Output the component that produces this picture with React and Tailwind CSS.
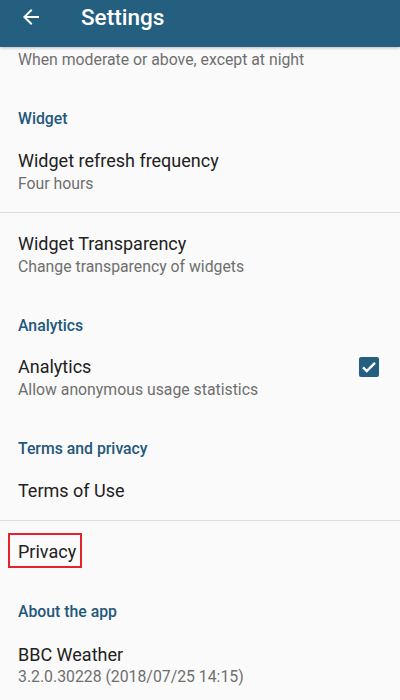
import React from "react";

function Title({ children, className = "" }) {
  return (
    <div className={"h-[20px] leading-[20px] text-[18px] text-[#212121] " + className}>{children}</div>
  );
}
function Summary({ children, className = "" }) {
  return (
    <div className={"h-[20px] leading-[20px] text-[15.8px] text-[#6f6f6f] " + className}>{children}</div>
  );
}
function Category({ children, className = "" }) {
  return (
    <div className={"h-[20px] leading-[20px] text-[15.8px] font-medium text-[#22587a] " + className}>{children}</div>
  );
}

export default function App() {
  return (
    <div
      className="w-[400px] h-[700px] overflow-hidden bg-[#fafafa] relative"
      style={{ fontFamily: "Roboto, 'Noto Sans', sans-serif" }}
    >
      <div className="h-[47px] bg-[#255f80] relative z-10 shadow-[0_1px_3px_rgba(0,0,0,0.25)]">
        <div className="flex items-center h-[34px]">
          <svg width="24" height="24" viewBox="0 0 24 24" className="ml-[19px] w-[24px] h-[24px]">
            <path d="M20 11H7.83l5.59-5.59L12 4l-8 8 8 8 1.41-1.41L7.83 13H20v-2z" fill="#ffffff" />
          </svg>
          <div className="ml-[38px] text-white text-[22.5px] font-medium leading-[34px]">Settings</div>
        </div>
      </div>

      <div className="px-[18px]">
        <Summary className="mt-[3px]">When moderate or above, except at night</Summary>
        <Category className="mt-[39px]">Widget</Category>
        <Title className="mt-[22px]">Widget refresh frequency</Title>
        <Summary className="mt-[3px]">Four hours</Summary>
      </div>
      <div className="mt-[18px] h-[1px] bg-[#dedede]" />
      <div className="px-[18px]">
        <Title className="mt-[21px]">Widget Transparency</Title>
        <Summary className="mt-[3px]">Change transparency of widgets</Summary>
        <Category className="mt-[39px]">Analytics</Category>
        <div className="mt-[21px] flex items-start justify-between">
          <div>
            <Title>Analytics</Title>
            <Summary className="mt-[3px]">Allow anonymous usage statistics</Summary>
          </div>
          <div className="mr-[3px] mt-[0px] w-[20px] h-[20px] rounded-[2px] bg-[#255f80] flex items-center justify-center">
            <svg width="18" height="18" viewBox="0 0 24 24">
              <path d="M4 12.5l5 5L20 6.5" fill="none" stroke="#ffffff" strokeWidth="3.2" />
            </svg>
          </div>
        </div>
        <Category className="mt-[39px]">Terms and privacy</Category>
        <Title className="mt-[22px]">Terms of Use</Title>
      </div>
      <div className="mt-[19px] h-[1px] bg-[#dedede]" />
      <div className="ml-[8px] mt-[12px] w-[74px] border-2 border-[#e3242b] pl-[8px] pt-[7px] pb-[4px]">
        <Title>Privacy</Title>
      </div>
      <div className="px-[18px]">
        <Category className="mt-[34px]">About the app</Category>
        <Title className="mt-[23px]">BBC Weather</Title>
        <Summary className="mt-[2px]">3.2.0.30228 (2018/07/25 14:15)</Summary>
      </div>
    </div>
  );
}
